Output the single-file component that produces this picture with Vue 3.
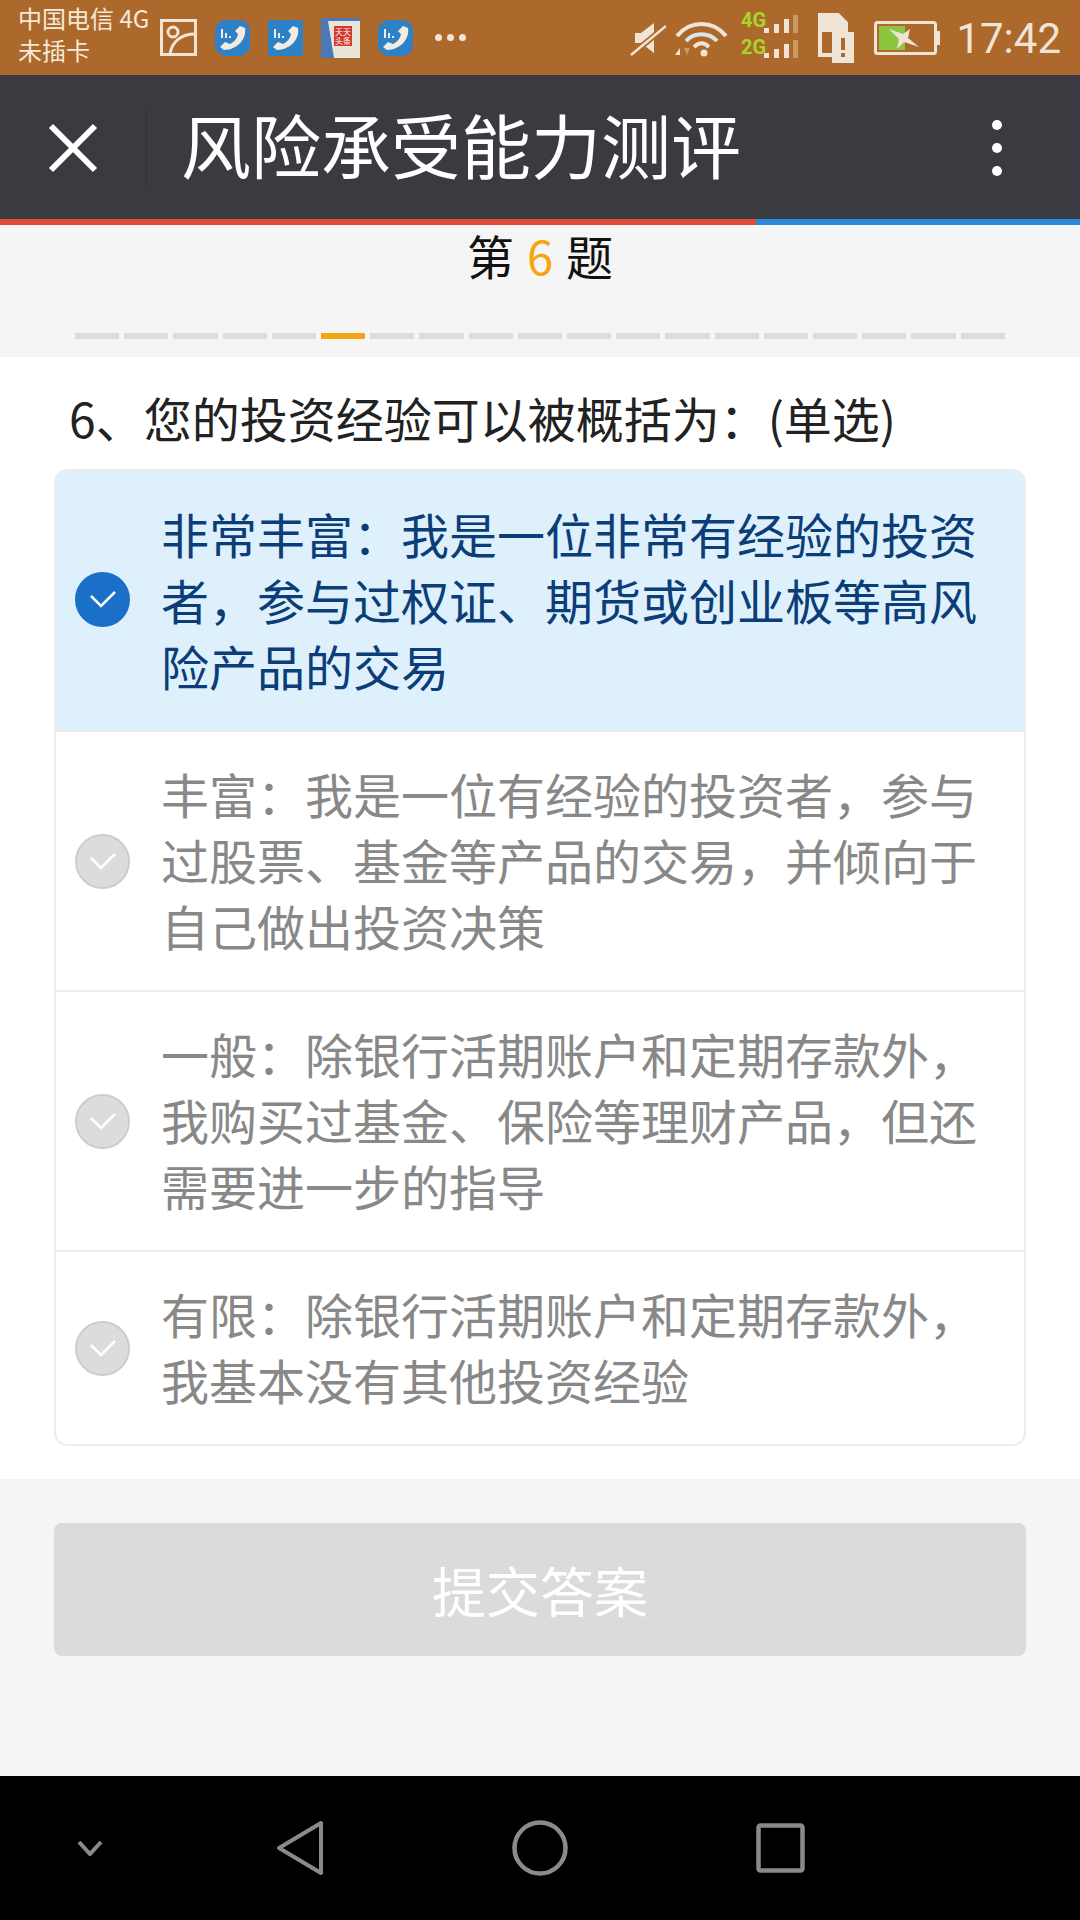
<template>
  <div class="page">
    <div class="status-bar">
      <div class="carrier">
        <span>中国电信 4G</span>
        <span>未插卡</span>
      </div>
      <svg class="ic-image" width="37" height="37" viewBox="0 0 37 37" fill="none" stroke="#f3e4d4" stroke-width="3">
        <rect x="1.5" y="1.5" width="34" height="34" />
        <circle cx="13" cy="13" r="5" />
        <path d="M10 35 C12 22 22 15 35 15" />
      </svg>
      <template v-for="app in apps" :key="app.id">
        <svg
            v-if="app.kind === 'phone'"
            class="ic-app"
            width="35"
            height="37"
            viewBox="0 0 35 37"
        >
          <rect x="0" y="1" width="35" height="36" :rx="app.radius" fill="#2f81c6" />
          <path d="M25 7 L30 9 C32 20 22 31 9 31 L5 28 L10 23 L15 25 C19 23 22 20 23 15 L20 12 Z" fill="#f2ece4" />
          <path d="M7 10 V19 M11 14 V19 M15 17 V19" stroke="#e8eef2" stroke-width="2" />
        </svg>
        <svg v-else class="ic-app" width="39" height="40" viewBox="0 0 39 40">
          <rect width="39" height="40" fill="#4b79b8" />
          <path d="M7 3 H39 V40 H13 Z" fill="#e9e4d8" />
          <rect x="13" y="8" width="18" height="20" fill="#d2392e" />
          <text x="22" y="17" class="stamp">天天</text>
          <text x="22" y="26" class="stamp">头条</text>
        </svg>
      </template>
      <div class="more-dots"><i></i><i></i><i></i></div>

      <div class="status-right">
        <svg class="ic-mute" width="36" height="36" viewBox="0 0 36 36" fill="#f0e4d6">
          <path d="M5 13 H11 L24 3 V33 L11 23 H5 Z" />
          <path d="M1 35 L36 6" stroke="#ad692b" stroke-width="6" />
          <path d="M1 35 L36 6" stroke="#f0e4d6" stroke-width="2.5" />
        </svg>
        <svg class="ic-wifi" width="55" height="38" viewBox="0 0 55 38" fill="none" stroke="#f0e4d6" stroke-width="4">
          <path d="M3 17 C16 1 39 1 52 17" />
          <path d="M12 22 C20 13 35 13 43 22" stroke="#dce5ea" />
          <path d="M20 28 C25 23 30 23 35 28" />
          <circle cx="30" cy="34" r="3.5" fill="#f0e4d6" stroke="none" />
          <path d="M1 36 L6 29 V36 Z" fill="#f0e4d6" stroke="none" />
          <path d="M10 29 H16 L13 36 Z" fill="#c99a62" stroke="none" />
        </svg>
        <svg class="ic-signal" width="58" height="56" viewBox="0 -5 58 56">
          <text x="0" y="15" class="net">4G</text>
          <text x="0" y="42" class="net">2G</text>
          <g fill="#f0e4d6">
            <rect x="23" y="16" width="5" height="5" /><rect x="33" y="12" width="5" height="9" /><rect x="43" y="7" width="5" height="14" />
            <rect x="23" y="41" width="5" height="5" /><rect x="33" y="37" width="5" height="9" /><rect x="43" y="32" width="5" height="14" />
          </g>
          <rect x="52" y="3" width="5" height="18" fill="#c99a62" />
          <rect x="52" y="28" width="5" height="18" fill="#c99a62" />
        </svg>
        <svg class="ic-sim" width="37" height="50" viewBox="0 0 37 50">
          <path d="M3 2 H21 L29 10 V42 H3 Z" fill="none" stroke="#f0e4d6" stroke-width="4" />
          <path d="M2 1 H21 L30 10 V19 H2 Z" fill="#f0e4d6" />
          <rect x="15" y="19" width="22" height="31" fill="#f0e4d6" />
          <rect x="24" y="25" width="4" height="12" fill="#ad692b" />
          <rect x="24" y="40" width="4" height="4" fill="#ad692b" />
        </svg>
        <svg class="ic-battery" width="66" height="34" viewBox="0 0 66 34">
          <rect x="1.5" y="1.5" width="60" height="31" rx="2" fill="none" stroke="#f0e4d6" stroke-width="3" />
          <rect x="63" y="10" width="3" height="14" fill="#f0e4d6" />
          <rect x="5" y="5" width="26" height="24" fill="#8cc63e" />
          <path d="M15 8 L29 13 L36 8 L34 17 L45 26 L30 21 L23 28 L25 18 Z" fill="#f0e4d6" />
        </svg>
        <span class="clock">17:42</span>
      </div>
    </div>

    <div class="nav-bar">
      <svg class="ic-close" width="50" height="50" viewBox="0 0 50 50" stroke="#fff" stroke-width="6">
        <path d="M3 3 L47 47 M47 3 L3 47" />
      </svg>
      <span class="nav-divider"></span>
      <span class="nav-title">风险承受能力测评</span>
      <div class="menu-dots"><i></i><i></i><i></i></div>
    </div>

    <div class="load-line"><span class="load-red"></span><span class="load-blue"></span></div>

    <div class="head">
      <div class="step-title">第<em>6</em>题</div>
      <div class="steps">
        <span
            v-for="n in 19"
            :key="n"
            class="step"
            :class="{ 'step-on': n === 6 }"
        ></span>
      </div>
    </div>

    <div class="body">
      <div class="question">6、您的投资经验可以被概括为：(单选)</div>
      <div class="options">
        <div
            v-for="(opt, index) in options"
            :key="index"
            class="option"
            :class="{ 'option-on': opt.selected }"
        >
          <span class="tick">
            <svg width="28" height="20" viewBox="0 0 28 20" fill="none" stroke="#fff" stroke-width="2.5">
              <path d="M2 7 L12 17 L26 3" />
            </svg>
          </span>
          <p class="option-text">{{ opt.text }}</p>
        </div>
      </div>
    </div>

    <div class="footer">
      <div class="submit">提交答案</div>
    </div>

    <div class="sys-nav">
      <svg class="sys-chevron" width="26" height="16" viewBox="0 0 26 16" fill="none" stroke="#8a8a8a" stroke-width="4">
        <path d="M2 2 L13 14 L24 2" />
      </svg>
      <svg class="sys-back" width="48" height="56" viewBox="0 0 48 56" fill="none" stroke="#8a8a8a" stroke-width="4" stroke-linejoin="round">
        <path d="M45 3 V53 L3 28 Z" />
      </svg>
      <svg class="sys-home" width="56" height="56" viewBox="0 0 56 56" fill="none" stroke="#8a8a8a" stroke-width="4.5">
        <circle cx="28" cy="28" r="25.5" />
      </svg>
      <svg class="sys-recent" width="49" height="50" viewBox="0 0 49 50" fill="none" stroke="#8a8a8a" stroke-width="4.5">
        <rect x="2.5" y="2.5" width="44" height="45" rx="2" />
      </svg>
    </div>
  </div>
</template>

<script setup>
const apps = [
  { id: 1, kind: 'phone', radius: 11 },
  { id: 2, kind: 'phone', radius: 1 },
  { id: 3, kind: 'news' },
  { id: 4, kind: 'phone', radius: 11 }
]

const options = [
  { text: '非常丰富：我是一位非常有经验的投资者，参与过权证、期货或创业板等高风险产品的交易', selected: true },
  { text: '丰富：我是一位有经验的投资者，参与过股票、基金等产品的交易，并倾向于自己做出投资决策', selected: false },
  { text: '一般：除银行活期账户和定期存款外，我购买过基金、保险等理财产品，但还需要进一步的指导', selected: false },
  { text: '有限：除银行活期账户和定期存款外，我基本没有其他投资经验', selected: false }
]
</script>

<style>
html, body {
  margin: 0;
  background: #f5f5f5;
}
</style>

<style scoped>
.page {
  width: 1080px;
  height: 1920px;
  display: flex;
  flex-direction: column;
  overflow: hidden;
  background: #f5f5f5;
  font-family: "Noto Sans CJK SC", "Noto Sans", sans-serif;
}

.status-bar {
  height: 75px;
  flex: none;
  display: flex;
  align-items: center;
  padding: 0 19px 0 18px;
  box-sizing: border-box;
  background: #ad692b;
}

.carrier {
  width: 142px;
  display: flex;
  flex-direction: column;
  padding-bottom: 7px;
  font-size: 24px;
  line-height: 32px;
  color: #f5e9dc;
  white-space: nowrap;
}

.ic-app {
  margin-left: 18px;
}

.stamp {
  font-size: 8px;
  fill: #fff;
  text-anchor: middle;
}

.more-dots {
  display: flex;
  gap: 5px;
  margin-left: 22px;
}

.more-dots i {
  width: 7px;
  height: 7px;
  border-radius: 50%;
  background: #f0e4d6;
}

.status-right {
  margin-left: auto;
  display: flex;
  align-items: center;
}

.ic-wifi {
  margin-left: 8px;
}

.ic-signal {
  margin: 0 0 5px 12px;
}

.net {
  font-family: "Roboto", sans-serif;
  font-size: 20px;
  font-weight: 700;
  fill: #a6d62a;
}

.ic-sim {
  margin-left: 18px;
}

.ic-battery {
  margin-left: 20px;
}

.clock {
  margin-left: 16px;
  padding-top: 2px;
  font-family: "Roboto", sans-serif;
  font-size: 42px;
  line-height: 50px;
  color: #f0e4d6;
}

.nav-bar {
  height: 144px;
  flex: none;
  display: flex;
  align-items: center;
  box-sizing: border-box;
  padding: 2px 78px 0 48px;
  background: #393b40;
}

.nav-divider {
  width: 2px;
  height: 74px;
  margin-left: 47px;
  background: #33353a;
}

.nav-title {
  margin: -8px 0 0 34px;
  font-size: 70px;
  line-height: 100px;
  color: #fff;
  white-space: nowrap;
}

.menu-dots {
  margin-left: auto;
  display: flex;
  flex-direction: column;
  gap: 13px;
}

.menu-dots i {
  display: block;
  width: 10px;
  height: 10px;
  border-radius: 50%;
  background: #fff;
}

.load-line {
  height: 6px;
  flex: none;
  display: flex;
}

.load-red {
  width: 756px;
  background: #e04a36;
}

.load-blue {
  flex: 1;
  background: #2a8bd8;
}

.head {
  height: 132px;
  flex: none;
  box-sizing: border-box;
  padding-top: 2px;
}

.step-title {
  height: 56px;
  font-size: 47px;
  line-height: 56px;
  color: #111;
  text-align: center;
}

.step-title em {
  margin: 0 13px;
  font-style: normal;
  color: #f5a50f;
}

.steps {
  display: flex;
  gap: 5px;
  margin: 50px 75px 0;
}

.step {
  flex: 1;
  height: 6px;
  background: #dcdcdc;
}

.step-on {
  background: #f5a50f;
}

.body {
  flex: none;
  height: 1122px;
  box-sizing: border-box;
  padding: 0 54px;
  background: #fff;
}

.question {
  height: 112px;
  box-sizing: border-box;
  padding: 28px 0 0 15px;
  font-size: 48px;
  line-height: 64px;
  color: #222;
  white-space: nowrap;
}

.options {
  border: 2px solid #ececec;
  border-radius: 14px;
  overflow: hidden;
}

.option {
  display: flex;
  align-items: center;
  box-sizing: border-box;
  padding: 30px 30px 30px 19px;
  border-top: 2px solid #ececec;
  color: #888;
}

.option:first-child {
  padding-top: 29px;
  padding-bottom: 32px;
  border-top: 0;
}

.option-on {
  background: #ddf0fc;
  color: #0b3d78;
}

.tick {
  width: 55px;
  height: 55px;
  flex: none;
  display: flex;
  align-items: center;
  justify-content: center;
  box-sizing: border-box;
  border: 2px solid #cdcdcd;
  border-radius: 50%;
  background: #dcdcdc;
}

.option-on .tick {
  border-color: #1a6fc9;
  background: #1a6fc9;
}

.option-text {
  margin: -2px 0 2px 31px;
  font-size: 48px;
  line-height: 66px;
  width: 827px;
}

.option-on .option-text {
  margin: 0 0 0 31px;
}

.footer {
  flex: 1;
  box-sizing: border-box;
  padding: 44px 54px 0;
}

.submit {
  height: 133px;
  border-radius: 8px;
  background: #dbdbdb;
  color: #fff;
  font-size: 54px;
  line-height: 133px;
  text-align: center;
}

.sys-nav {
  height: 144px;
  flex: none;
  display: flex;
  align-items: center;
  box-sizing: border-box;
  padding-left: 77px;
  background: #000;
}

.sys-back {
  margin-left: 173px;
}

.sys-home {
  margin-left: 188px;
}

.sys-recent {
  margin-left: 188px;
}
</style>
